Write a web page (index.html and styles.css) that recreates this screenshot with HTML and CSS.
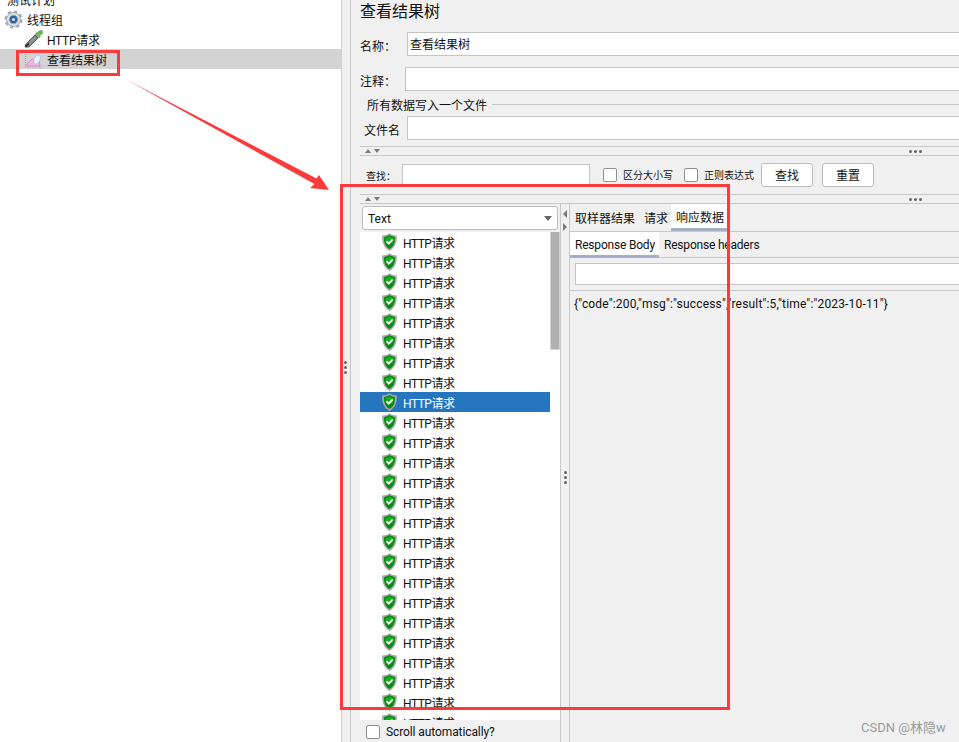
FILE: index.html
```html
<!DOCTYPE html>
<html lang="en">
<head>
  <meta charset="UTF-8" />
  <title>查看结果树</title>
  <link rel="stylesheet" href="styles.css">
</head>
<body>
  <svg class="defs" width="0" height="0">
    <symbol id="shield" viewBox="0 0 15 18">
      <path d="M7.5 0.2 C9.5 1.7 12 2.3 14.8 2.5 C15.2 9 13.5 14.6 7.5 17.9 C1.5 14.6 -0.2 9 0.2 2.5 C3 2.3 5.5 1.7 7.5 0.2 Z" fill="#a8aaa8"/>
      <path d="M7.5 2 C9.2 3.1 11 3.7 12.9 3.9 C13.2 9 12 13.4 7.5 15.9 C3 13.4 1.8 9 2.1 3.9 C4 3.7 5.8 3.1 7.5 2 Z" fill="#078a10"/>
      <path d="M7.5 3.6 C8.8 4.4 10.2 4.9 11.5 5.1 C11.6 7 11.3 8.8 10.7 10.4 L4.3 10.4 C3.7 8.8 3.4 7 3.5 5.1 C4.8 4.9 6.2 4.4 7.5 3.6 Z" fill="#17ad20"/>
      <path d="M4.6 8.4 L6.8 10.6 L10.6 6.5" fill="none" stroke="#fff" stroke-width="1.8"/>
    </symbol>
  </svg>

  <div class="tree">
    <div class="tree-row"><span class="tree-label">测试计划</span></div>
    <div class="tree-row level-1">
      <svg class="tree-icon" width="19" height="19" viewBox="0 0 19 19">
        <circle cx="9.5" cy="9.5" r="7.6" fill="none" stroke="#a4a8ae" stroke-width="3" stroke-dasharray="3 3"/>
        <circle cx="9.5" cy="9.5" r="7" fill="#dfe1e4" stroke="#a0a4aa"/>
        <circle cx="9.5" cy="9.5" r="4.2" fill="#2c5f9e" stroke="#8fa6c2"/>
        <circle cx="9.5" cy="9.5" r="1.6" fill="#cfe0f4"/>
      </svg>
      <span class="tree-text">线程组</span>
    </div>
    <div class="tree-row level-2">
      <svg class="tree-icon" width="20" height="20" viewBox="0 0 20 20">
        <path d="M1 18 L2 15 L11 6 L14 9 L5 18 Z" fill="#8d9296" stroke="#3b3f42" stroke-width="0.9"/>
        <path d="M2 17.5 L5 14.5" stroke="#222" stroke-width="1.4"/>
        <path d="M11 5 L15 9 L16.5 7.5 L15.5 6.5 C18 6 19.5 3.5 18.5 2 C17.5 0.5 14.5 1.5 13.5 4 L12.5 3.5 Z" fill="#76b260" stroke="#5a9148" stroke-width="0.5"/>
      </svg>
      <span class="tree-text http-text">HTTP请求</span>
    </div>
    <div class="tree-row level-2 active">
      <svg class="tree-icon" width="20" height="20" viewBox="0 0 20 20">
        <path d="M1.5 3 L1.5 18 L18 18" fill="none" stroke="#9c9c9c" stroke-dasharray="1 1"/>
        <path d="M3 17 L3 14.5 L8 10 L11 12 L15 10 L16 17 Z" fill="#f5b2e2" stroke="#dc6fbf" stroke-width="0.6"/>
        <ellipse cx="13" cy="10.5" rx="3" ry="5" transform="rotate(25 13 10.5)" fill="#e9f1fb" stroke="#a6bedb" stroke-width="0.8"/>
      </svg>
      <span class="tree-text">查看结果树</span>
    </div>
  </div>

  <div class="split-v"><i></i><i></i><i></i></div>

  <div class="main">
    <div class="title">查看结果树</div>

    <div class="form-row name-row">
      <label class="form-label">名称：</label>
      <div class="field name-field">查看结果树</div>
    </div>
    <div class="form-row comment-row">
      <label class="form-label">注释：</label>
      <div class="field comment-field"></div>
    </div>

    <div class="legend"><span>所有数据写入一个文件</span></div>
    <div class="form-row file-row">
      <label class="form-label">文件名</label>
      <div class="field file-field"></div>
    </div>

    <div class="split-h first">
      <span class="arrow-up"></span><span class="arrow-down"></span>
      <span class="dots"><i></i><i></i><i></i></span>
    </div>

    <div class="search-row">
      <label class="small-label search-label">查找：</label>
      <div class="field search-field"></div>
      <span class="check"></span>
      <label class="small-label check-text">区分大小写</label>
      <span class="check"></span>
      <label class="small-label check-text">正则表达式</label>
      <div class="btn">查找</div>
      <div class="btn">重置</div>
    </div>

    <div class="split-h second">
      <span class="arrow-up"></span><span class="arrow-down"></span>
      <span class="dots"><i></i><i></i><i></i></span>
    </div>

    <div class="results">
      <div class="left-pane">
        <div class="combo">
          <span>Text</span>
          <span class="combo-arrow"></span>
        </div>
        <div class="list-wrap">
          <div class="list">
            <div class="list-row"><svg class="shield"><use href="#shield"/></svg>HTTP请求</div>
            <div class="list-row"><svg class="shield"><use href="#shield"/></svg>HTTP请求</div>
            <div class="list-row"><svg class="shield"><use href="#shield"/></svg>HTTP请求</div>
            <div class="list-row"><svg class="shield"><use href="#shield"/></svg>HTTP请求</div>
            <div class="list-row"><svg class="shield"><use href="#shield"/></svg>HTTP请求</div>
            <div class="list-row"><svg class="shield"><use href="#shield"/></svg>HTTP请求</div>
            <div class="list-row"><svg class="shield"><use href="#shield"/></svg>HTTP请求</div>
            <div class="list-row"><svg class="shield"><use href="#shield"/></svg>HTTP请求</div>
            <div class="list-row selected"><svg class="shield"><use href="#shield"/></svg>HTTP请求</div>
            <div class="list-row"><svg class="shield"><use href="#shield"/></svg>HTTP请求</div>
            <div class="list-row"><svg class="shield"><use href="#shield"/></svg>HTTP请求</div>
            <div class="list-row"><svg class="shield"><use href="#shield"/></svg>HTTP请求</div>
            <div class="list-row"><svg class="shield"><use href="#shield"/></svg>HTTP请求</div>
            <div class="list-row"><svg class="shield"><use href="#shield"/></svg>HTTP请求</div>
            <div class="list-row"><svg class="shield"><use href="#shield"/></svg>HTTP请求</div>
            <div class="list-row"><svg class="shield"><use href="#shield"/></svg>HTTP请求</div>
            <div class="list-row"><svg class="shield"><use href="#shield"/></svg>HTTP请求</div>
            <div class="list-row"><svg class="shield"><use href="#shield"/></svg>HTTP请求</div>
            <div class="list-row"><svg class="shield"><use href="#shield"/></svg>HTTP请求</div>
            <div class="list-row"><svg class="shield"><use href="#shield"/></svg>HTTP请求</div>
            <div class="list-row"><svg class="shield"><use href="#shield"/></svg>HTTP请求</div>
            <div class="list-row"><svg class="shield"><use href="#shield"/></svg>HTTP请求</div>
            <div class="list-row"><svg class="shield"><use href="#shield"/></svg>HTTP请求</div>
            <div class="list-row"><svg class="shield"><use href="#shield"/></svg>HTTP请求</div>
            <div class="list-row"><svg class="shield"><use href="#shield"/></svg>HTTP请求</div>
          </div>
          <div class="scrollbar"><div class="thumb"></div></div>
        </div>
        <div class="auto-row">
          <span class="check"></span>
          <label>Scroll automatically?</label>
        </div>
      </div>

      <div class="split-inner">
        <span class="arrow-left"></span>
        <span class="arrow-right"></span>
        <span class="inner-dots"><i></i><i></i><i></i></span>
      </div>

      <div class="right-pane">
        <div class="tabs">
          <div class="tab">取样器结果</div>
          <div class="tab">请求</div>
          <div class="tab on">响应数据</div>
        </div>
        <div class="subtabs">
          <div class="subtab on">Response Body</div>
          <div class="subtab">Response headers</div>
        </div>
        <div class="body-search"><div class="field"></div></div>
        <div class="body-text">{"code":200,"msg":"success","result":5,"time":"2023-10-11"}</div>
      </div>
    </div>
  </div>

  <!-- annotations drawn on top of the screenshot -->
  <div class="mark mark-tree"></div>
  <div class="mark mark-results"></div>
  <svg class="mark-arrow" width="959" height="742" viewBox="0 0 959 742">
    <polygon points="127,80 314.5,184 310,188 329,190 319,175 316.5,178.5" fill="#fb3b3b"/>
  </svg>
  <div class="watermark">CSDN @林隐w</div>
</body>
</html>
```

FILE: styles.css
```css
* {
  box-sizing: border-box;
}
html, body {
  height: 100%;
}
body {
  margin: 0;
  width: 959px;
  height: 742px;
  overflow: hidden;
  display: flex;
  position: relative;
  background: #f0f0f0;
  color: #111;
  font-family: Roboto, "Noto Sans CJK SC", sans-serif;
  font-size: 12px;
}
.defs {
  position: absolute;
}

/* left tree */
.tree {
  width: 341px;
  flex: none;
  background: #fff;
  margin-top: -11px;
  height: 753px;
}
.tree-row {
  height: 20px;
  display: flex;
  align-items: center;
  white-space: nowrap;
}
.tree-label {
  margin-left: 7px;
}
.tree-text {
  padding-top: 1px;
}
.http-text {
  letter-spacing: -0.3px;
}
.level-1 {
  padding-left: 4px;
  gap: 4px;
}
.level-2 {
  padding-left: 24px;
  gap: 3px;
}
.tree-row.active {
  background: #d3d3d3;
}
.tree-icon {
  flex: none;
}

.split-v {
  width: 10px;
  flex: none;
  display: flex;
  flex-direction: column;
  align-items: center;
  justify-content: center;
  gap: 2px;
  padding: 0 2px 8px 0;
  border-left: 1px solid #d0d0d0;
  border-right: 1px solid #c8c8c8;
}
.split-v i, .inner-dots i {
  width: 3px;
  height: 3px;
  border-radius: 50%;
  background: #666;
}

/* right side */
.main {
  flex: 1;
  min-width: 0;
  padding-left: 9px;
}
.title {
  height: 22px;
  line-height: 24px;
  font-size: 16px;
}
.form-row {
  display: flex;
  align-items: center;
  height: 24px;
}
.form-label {
  white-space: nowrap;
  padding-top: 2px;
}
.field {
  height: 24px;
  background: #fff;
  border: 1px solid #c4c4c4;
  line-height: 24px;
  padding-left: 2px;
}
.name-row {
  margin-top: 10px;
}
.name-field {
  margin-left: 11px;
  flex: 1;
  margin-right: -10px;
}
.comment-row {
  margin-top: 11px;
}
.comment-field {
  margin-left: 9px;
  flex: 1;
  margin-right: -10px;
}
.legend {
  height: 17px;
  margin-top: 5px;
  margin-left: 2px;
  display: flex;
  align-items: center;
  white-space: nowrap;
  background: linear-gradient(#c8c8c8, #c8c8c8) 0 8px / 100% 1px no-repeat;
}
.legend span {
  padding: 0 5px;
  background: #f0f0f0;
}
.file-row {
  margin-top: 3px;
  padding-left: 4px;
}
.file-field {
  margin-left: 7px;
  flex: 1;
  margin-right: -10px;
}

.split-h {
  height: 10px;
  border-top: 1px solid #c8c8c8;
  border-bottom: 1px solid #c8c8c8;
  display: flex;
  align-items: center;
  padding-left: 5px;
  gap: 3px;
}
.split-h.first {
  margin-top: 6px;
}
.split-h.second {
  margin-top: 7px;
}
.arrow-up {
  width: 0;
  height: 0;
  border: 3.5px solid transparent;
  border-top: 0;
  border-bottom: 4px solid #7a7a7a;
}
.arrow-down {
  width: 0;
  height: 0;
  border: 3.5px solid transparent;
  border-bottom: 0;
  border-top: 4px solid #7a7a7a;
}
.dots {
  display: flex;
  gap: 2px;
  margin-left: 526px;
}
.dots i {
  width: 3px;
  height: 3px;
  border-radius: 50%;
  background: #666;
}

.search-row {
  display: flex;
  align-items: center;
  height: 24px;
  margin-top: 7px;
}
.small-label {
  font-size: 10px;
  white-space: nowrap;
}
.search-label {
  margin-left: 6px;
}
.search-field {
  width: 188px;
  height: 22px;
  margin-left: 6px;
}
.check {
  width: 14px;
  height: 14px;
  flex: none;
  background: #fff;
  border: 1px solid #8f8f8f;
  border-radius: 2px;
}
.search-field + .check {
  margin-left: 13px;
}
.check-text {
  margin: 0 0 2px 6px;
  width: 50px;
}
.check-text + .check {
  margin-left: 11px;
}
.btn {
  width: 52px;
  height: 24px;
  margin-left: 7px;
  background: #fff;
  border: 1px solid #bdbdbd;
  border-radius: 3px;
  text-align: center;
  line-height: 24px;
}
.btn + .btn {
  margin-left: 9px;
}

/* results area */
.results {
  display: flex;
  height: 539px;
}
.left-pane {
  width: 201px;
  flex: none;
  border-right: 1px solid #c8c8c8;
}
.combo {
  height: 24px;
  margin: 2px 2px 0;
  padding: 1px 5px 0;
  background: #fff;
  border: 1px solid #bdbdbd;
  border-radius: 3px;
  display: flex;
  align-items: center;
  justify-content: space-between;
}
.combo-arrow {
  width: 0;
  height: 0;
  border: 4.5px solid transparent;
  border-bottom: 0;
  border-top: 5px solid #666;
}
.list-wrap {
  display: flex;
  height: 488px;
  margin-top: 2px;
  background: #fff;
  overflow: hidden;
}
.list {
  width: 190px;
  flex: none;
}
.list-row {
  height: 20px;
  display: flex;
  align-items: center;
  padding: 1px 0 0 22px;
  white-space: nowrap;
  letter-spacing: -0.5px;
}
.list-row.selected {
  background: #2675bf;
  color: #fff;
}
.shield {
  width: 15px;
  height: 18px;
  flex: none;
  margin: -1px 6px 0 0;
}
.scrollbar {
  width: 10px;
  flex: none;
  background: #fff;
}
.thumb {
  height: 118px;
  background: #b0b0b0;
  border: 1px solid #d4d4d4;
  border-top: 0;
}
.auto-row {
  display: flex;
  align-items: center;
  height: 22px;
  padding: 1px 0 0 6px;
  gap: 6px;
  letter-spacing: -0.1px;
}
.split-inner {
  width: 8px;
  flex: none;
  display: flex;
  flex-direction: column;
  align-items: center;
  padding-top: 6px;
  gap: 5px;
}
.arrow-left {
  width: 0;
  height: 0;
  border: 4px solid transparent;
  border-left: 0;
  border-right: 4px solid #7a7a7a;
}
.arrow-right {
  width: 0;
  height: 0;
  border: 4px solid transparent;
  border-right: 0;
  border-left: 4px solid #7a7a7a;
}
.inner-dots {
  display: flex;
  flex-direction: column;
  gap: 2px;
  margin-top: 235px;
}
.right-pane {
  flex: 1;
  min-width: 0;
  border-left: 1px solid #c8c8c8;
}
.tabs {
  display: flex;
  height: 28px;
  padding-left: 4px;
  border-bottom: 1px solid #c8c8c8;
}
.tab {
  padding: 0 1px;
  margin-right: 2px;
  line-height: 30px;
  white-space: nowrap;
}
.tab + .tab {
  margin-left: 5px;
}
.tab.on {
  margin-left: 0;
  padding: 0 0 0 5px;
  width: 56px;
  background: #fff;
  border-bottom: 3px solid #a3afc4;
  line-height: 28px;
  height: 27px;
}
.subtabs {
  display: flex;
  height: 26px;
  border-bottom: 1px solid #c8c8c8;
}
.subtab {
  padding: 0 5px;
  line-height: 27px;
  white-space: nowrap;
  letter-spacing: -0.2px;
}
.subtab.on {
  width: 89px;
  background: #fff;
  border-bottom: 3px solid #a3afc4;
  height: 26px;
}
.body-search {
  height: 33px;
  padding: 5px 0 0 5px;
  border-bottom: 1px solid #c8c8c8;
}
.body-search .field {
  height: 22px;
  margin-right: -10px;
}
.body-text {
  padding: 5px 0 0 4px;
  white-space: nowrap;
  line-height: 17px;
  letter-spacing: 0.17px;
}

/* annotations */
.mark {
  position: absolute;
  border: 3px solid #fb3b3b;
}
.mark-tree {
  left: 16px;
  top: 50px;
  width: 104px;
  height: 26px;
}
.mark-results {
  left: 340px;
  top: 184px;
  width: 390px;
  height: 526px;
}
.mark-arrow {
  position: absolute;
  left: 0;
  top: 0;
  pointer-events: none;
}
.watermark {
  position: absolute;
  left: 861px;
  top: 717px;
  color: #9a9a9a;
  font-size: 13px;
  white-space: nowrap;
}
```
